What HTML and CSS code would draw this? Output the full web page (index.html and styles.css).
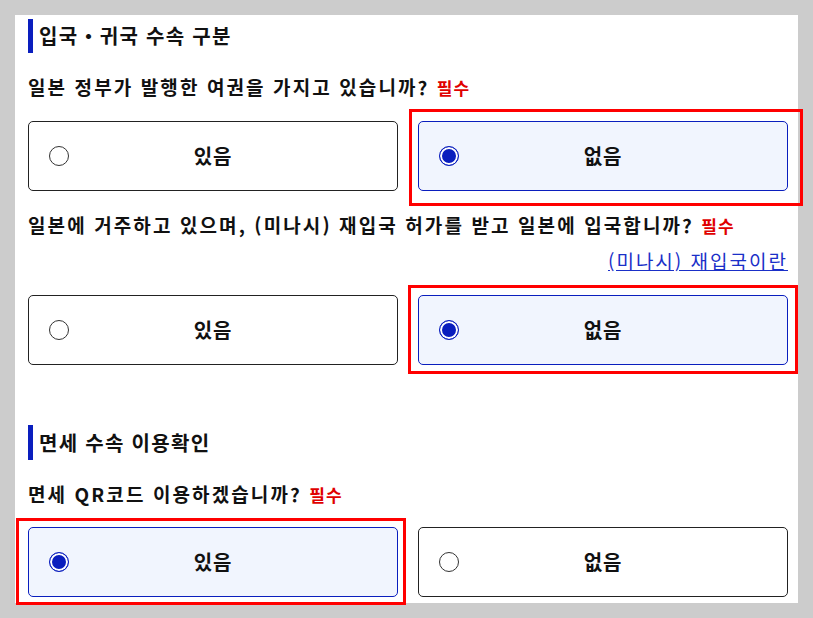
FILE: index.html
```html
<!DOCTYPE html>
<html lang="ko">
<head>
  <meta charset="UTF-8">
  <meta name="viewport" content="width=device-width, initial-scale=1">
  <title>입국 수속</title>
  <link rel="stylesheet" href="styles.css">
</head>
<body>
  <div class="shot">
    <div class="panel">
      <h2 class="section-title">입국・귀국 수속 구분</h2>

      <p class="question">일본 정부가 발행한 여권을 가지고 있습니까? <span class="req">필수</span></p>
      <div class="options">
        <label class="option"><span class="radio"></span><span class="option-text">있음</span></label>
        <label class="option checked"><span class="radio"></span><span class="option-text">없음</span></label>
      </div>

      <p class="question">일본에 거주하고 있으며, (미나시) 재입국 허가를 받고 일본에 입국합니까? <span class="req">필수</span></p>
      <div class="help"><a href="#">(미나시) 재입국이란</a></div>
      <div class="options">
        <label class="option"><span class="radio"></span><span class="option-text">있음</span></label>
        <label class="option checked"><span class="radio"></span><span class="option-text">없음</span></label>
      </div>

      <h2 class="section-title second">면세 수속 이용확인</h2>

      <p class="question">면세 QR코드 이용하겠습니까? <span class="req">필수</span></p>
      <div class="options last">
        <label class="option checked"><span class="radio"></span><span class="option-text">있음</span></label>
        <label class="option"><span class="radio"></span><span class="option-text">없음</span></label>
      </div>
    </div>

    <!-- 빨간 강조 박스 (스크린샷 주석) -->
    <div class="mark mark-1"></div>
    <div class="mark mark-2"></div>
    <div class="mark mark-3"></div>
  </div>
</body>
</html>
```

FILE: styles.css
```css
* { margin: 0; padding: 0; box-sizing: border-box; }
html, body {
  height: 100%;
  background: #cccccc;
  font-family: "Noto Sans CJK KR", "Noto Sans", sans-serif;
  color: #111;
}
.shot {
  position: relative;
  width: 813px;
  height: 618px;
  padding: 15px 15px 0 15px;
  overflow: hidden;
}
.panel {
  background: #fff;
  height: 588px;
  padding: 4px 10px 0 13px;
  overflow: hidden;
}
.section-title {
  border-left: 5px solid #0a1ebe;
  padding-left: 6px;
  font-size: 20px;
  line-height: 34px;
  font-weight: 700;
  letter-spacing: 1.3px;
}
.section-title.second {
  margin-top: 60px;
  line-height: 35px;
}
.question {
  margin-top: 21px;
  font-size: 19px;
  line-height: 26px;
  font-weight: 700;
  letter-spacing: 2.1px;
}
.req {
  color: #e00000;
  font-size: 17px;
  line-height: 1;
  letter-spacing: 1px;
}
.help {
  margin-top: 10px;
  text-align: right;
  font-size: 19px;
  line-height: 26px;
  letter-spacing: 2px;
}
.help a { color: #1a2fc8; }
.options {
  margin-top: 21px;
  display: grid;
  grid-template-columns: 1fr 1fr;
  gap: 20px;
}
.options.last { margin-top: 20px; }
.option {
  height: 70px;
  border: 1px solid #222;
  border-radius: 5px;
  background: #fff;
  display: grid;
  grid-template-columns: 20px 1fr 20px;
  align-items: center;
  padding: 0 20px;
  cursor: pointer;
}
.option.checked {
  border-color: #0a1ebe;
  background: #f1f5fe;
}
.radio {
  width: 20px;
  height: 20px;
  border: 1px solid #333;
  border-radius: 50%;
  background: #fff;
}
.option.checked .radio {
  border-color: #0a1ebe;
  background: #0a1ebe;
  box-shadow: inset 0 0 0 2px #fff;
}
.option-text {
  text-align: center;
  font-size: 20px;
  line-height: 24px;
  font-weight: 700;
  letter-spacing: 0.8px;
}
.mark {
  position: absolute;
  border: 3px solid #ff0000;
}
.mark-1 { left: 409px; top: 109px; width: 394px; height: 97px; }
.mark-2 { left: 408px; top: 285px; width: 390px; height: 89px; }
.mark-3 { left: 16px; top: 518px; width: 390px; height: 87px; }
```
